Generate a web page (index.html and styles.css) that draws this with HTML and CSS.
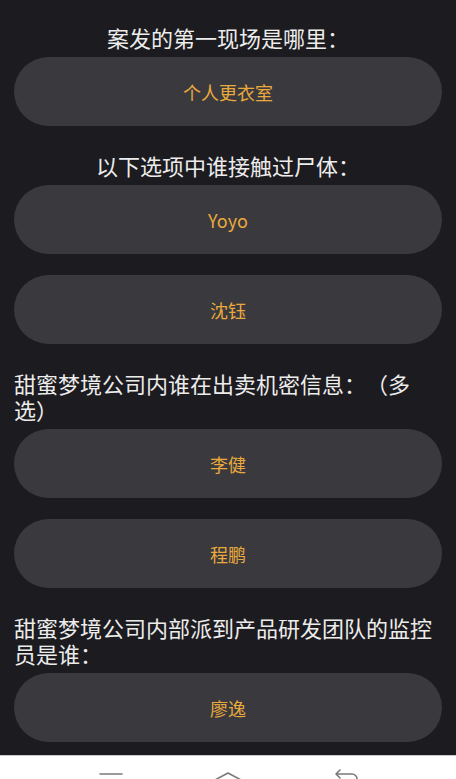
FILE: index.html
```html
<!DOCTYPE html>
<html lang="zh-CN">
<head>
<meta charset="utf-8">
<title>案件问答</title>
<link rel="stylesheet" href="styles.css">
</head>
<body>
<div class="screen">
  <main class="quiz">
    <section class="question">
      <h2 class="q-title center">案发的第一现场是哪里：</h2>
      <div class="options">
        <button class="option">个人更衣室</button>
      </div>
    </section>
    <section class="question">
      <h2 class="q-title center">以下选项中谁接触过尸体：</h2>
      <div class="options">
        <button class="option">Yoyo</button>
        <button class="option">沈钰</button>
      </div>
    </section>
    <section class="question">
      <h2 class="q-title">甜蜜梦境公司内谁在出卖机密信息：（多选）</h2>
      <div class="options">
        <button class="option">李健</button>
        <button class="option">程鹏</button>
      </div>
    </section>
    <section class="question">
      <h2 class="q-title">甜蜜梦境公司内部派到产品研发团队的监控员是谁：</h2>
      <div class="options">
        <button class="option">廖逸</button>
      </div>
    </section>
  </main>
  <nav class="navbar">
    <svg class="nav-icon icon-menu" viewBox="0 0 30 24" width="30" height="24"><path d="M4 19H26M4 25H26M4 31H26"/></svg>
    <svg class="nav-icon icon-home" viewBox="0 0 30 24" width="30" height="24"><path d="M0 26L15 18L30 26"/></svg>
    <svg class="nav-icon icon-back" viewBox="0 0 30 24" width="30" height="24"><path d="M6 19H22a5 5 0 0 1 5 5V30M6 19L10 15M6 19L10 23"/></svg>
  </nav>
</div>
</body>
</html>
```

FILE: styles.css
```css
* { box-sizing: border-box; }
html, body {
  margin: 0;
  padding: 0;
  background: #1c1b1f;
}
body {
  font-family: "Noto Sans CJK SC", "Noto Sans", sans-serif;
}
.screen {
  width: 456px;
  height: 779px;
  display: flex;
  flex-direction: column;
  overflow: hidden;
}
.quiz {
  height: 755px;
  padding: 24px 14px 0;
  overflow: hidden;
  background: #1c1b1f;
}
.question {
  margin-bottom: 26px;
}
.q-title {
  margin: 0 0 7px;
  font-size: 22px;
  font-weight: 400;
  line-height: 26px;
  color: #ececec;
  text-align: left;
  text-spacing-trim: space-all;
  font-feature-settings: normal;
}
.q-title.center {
  text-align: center;
}
.options {
  display: flex;
  flex-direction: column;
  gap: 21px;
}
.option {
  display: block;
  width: 100%;
  height: 69px;
  border: none;
  border-radius: 35px;
  background: #3a393d;
  color: #e9a93e;
  font-family: "Noto Sans CJK SC", "Noto Sans", sans-serif;
  font-size: 18px;
  font-weight: 400;
  padding: 0;
  text-align: center;
}
.navbar {
  flex: 1;
  background: #ffffff;
  border-top: 1px solid #c9c9c9;
  display: flex;
  justify-content: center;
  align-items: flex-start;
  gap: 87px;
}
.nav-icon {
  display: block;
  margin-top: -1px;
  overflow: hidden;
}
.nav-icon path {
  fill: none;
  stroke: #7a7a7a;
  stroke-width: 1.6;
  stroke-linecap: round;
  stroke-linejoin: round;
}
```
